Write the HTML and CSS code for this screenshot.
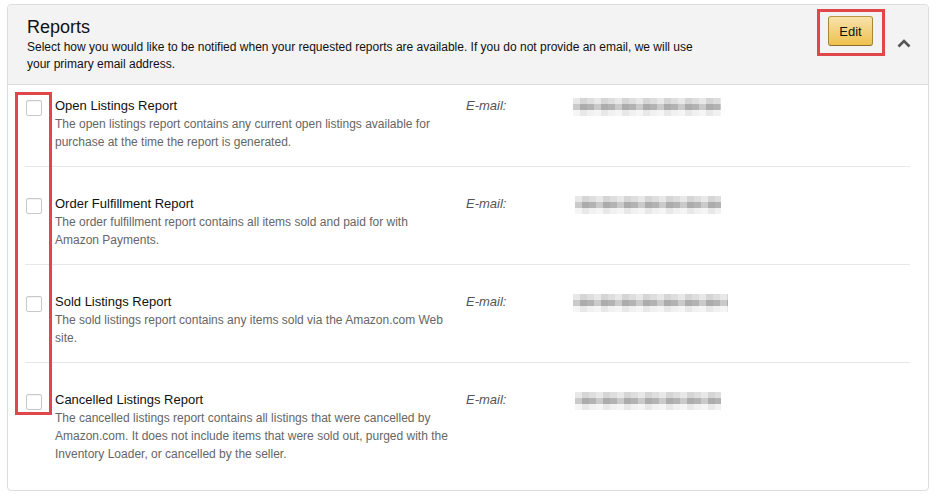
FILE: index.html
```html
<!DOCTYPE html>
<html>
<head>
<meta charset="utf-8">
<link rel="stylesheet" href="styles.css">
</head>
<body>
<div class="panel">
  <div class="panel-head">
    <div class="head-text">
      <h2 class="title">Reports</h2>
      <p class="intro">Select how you would like to be notified when your requested reports are available. If you do not provide an email, we will use your primary email address.</p>
    </div>
    <div class="head-actions">
      <button class="btn-edit">Edit</button>
      <svg class="chevron" width="14" height="9" viewBox="0 0 14 9"><path d="M1.5 7.5 L7 2 L12.5 7.5" fill="none" stroke="#555" stroke-width="2.6"/></svg>
    </div>
  </div>
  <div class="rows">
    <div class="row first">
      <span class="check"></span>
      <div class="info">
        <div class="name">Open Listings Report</div>
        <div class="desc">The open listings report contains any current open listings available for purchase at the time the report is generated.</div>
      </div>
      <div class="label">E-mail:</div>
      <div class="blur"></div>
    </div>
    <div class="row">
      <span class="check"></span>
      <div class="info">
        <div class="name">Order Fulfillment Report</div>
        <div class="desc">The order fulfillment report contains all items sold and paid for with Amazon Payments.</div>
      </div>
      <div class="label">E-mail:</div>
      <div class="blur shift"></div>
    </div>
    <div class="row">
      <span class="check"></span>
      <div class="info">
        <div class="name">Sold Listings Report</div>
        <div class="desc">The sold listings report contains any items sold via the Amazon.com Web site.</div>
      </div>
      <div class="label">E-mail:</div>
      <div class="blur wide"></div>
    </div>
    <div class="row last">
      <span class="check"></span>
      <div class="info">
        <div class="name">Cancelled Listings Report</div>
        <div class="desc">The cancelled listings report contains all listings that were cancelled by Amazon.com. It does not include items that were sold out, purged with the Inventory Loader, or cancelled by the seller.</div>
      </div>
      <div class="label">E-mail:</div>
      <div class="blur shift"></div>
    </div>
  </div>
</div>
<div class="mark mark-edit"></div>
<div class="mark mark-checks"></div>
</body>
</html>
```
FILE: styles.css
```css
* { box-sizing: border-box; }
body {
  margin: 0;
  background: #fff;
  font-family: "Liberation Sans", Arial, sans-serif;
  color: #111;
  position: relative;
}
.panel {
  margin: 4px 7px 0 7px;
  border: 1px solid #ddd;
  border-radius: 4px;
  height: 487px;
}
.panel-head {
  background: #f3f3f3;
  border-bottom: 1px solid #ddd;
  border-radius: 4px 4px 0 0;
  height: 80px;
  display: flex;
  justify-content: space-between;
  padding: 0 17px 0 19px;
}
.head-text { padding-top: 10px; }
.title {
  margin: 0;
  font-size: 18px;
  font-weight: normal;
  line-height: 24px;
  color: #111;
}
.intro {
  margin: 0;
  width: 672px;
  font-size: 12px;
  line-height: 17px;
  color: #111;
}
.head-actions {
  display: flex;
  align-items: flex-start;
  padding-top: 11px;
}
.btn-edit {
  width: 45px;
  height: 30px;
  border: 1px solid;
  border-color: #b8973f #a88734 #8a6e2a;
  border-radius: 3px;
  background: linear-gradient(to bottom, #f8e3ad, #eec14e);
  font-family: "Liberation Sans", Arial, sans-serif;
  font-size: 13px;
  color: #111;
  padding: 0;
}
.chevron {
  margin-left: 24px;
  margin-top: 23px;
}
.rows {
  margin: 0 18px 0 17px;
}
.row {
  display: flex;
  align-items: flex-start;
  padding: 28px 0 15px 0;
  border-bottom: 1px solid #e7e7e7;
}
.row.first { padding-top: 12px; }
.row.last { border-bottom: none; }
.check {
  flex: none;
  width: 16px;
  height: 16px;
  margin: 3px 13px 0 1px;
  border: 1px solid #c8c8c8;
  border-radius: 2px;
  background: #fff;
  box-shadow: inset 0 1px 1px rgba(0,0,0,0.05);
}
.info {
  width: 411px;
  flex: none;
  padding-right: 14px;
}
.name {
  font-size: 13px;
  line-height: 18px;
  color: #111;
}
.desc {
  font-size: 12px;
  line-height: 18px;
  color: #666;
}
.label {
  width: 107px;
  flex: none;
  font-size: 13px;
  line-height: 18px;
  font-style: italic;
  color: #555;
}
.blur {
  width: 148px;
  height: 18px;
  margin-top: 1px;
  background:
    repeating-linear-gradient(to right, rgba(255,255,255,0.3) 0 7px, rgba(0,0,0,0.04) 7px 14px, rgba(255,255,255,0) 14px 21px),
    linear-gradient(to bottom, #dedede 0 6px, #b3b3b3 6px 12px, #f1f1f1 12px 18px);
}
.blur.shift { margin-left: 2px; width: 146px; }
.blur.wide { width: 155px; }
.mark {
  position: absolute;
  border: 3px solid #e0474c;
}
.mark-edit {
  left: 817px;
  top: 9px;
  width: 68px;
  height: 47px;
}
.mark-checks {
  left: 15px;
  top: 92px;
  width: 37px;
  height: 323px;
}
```
